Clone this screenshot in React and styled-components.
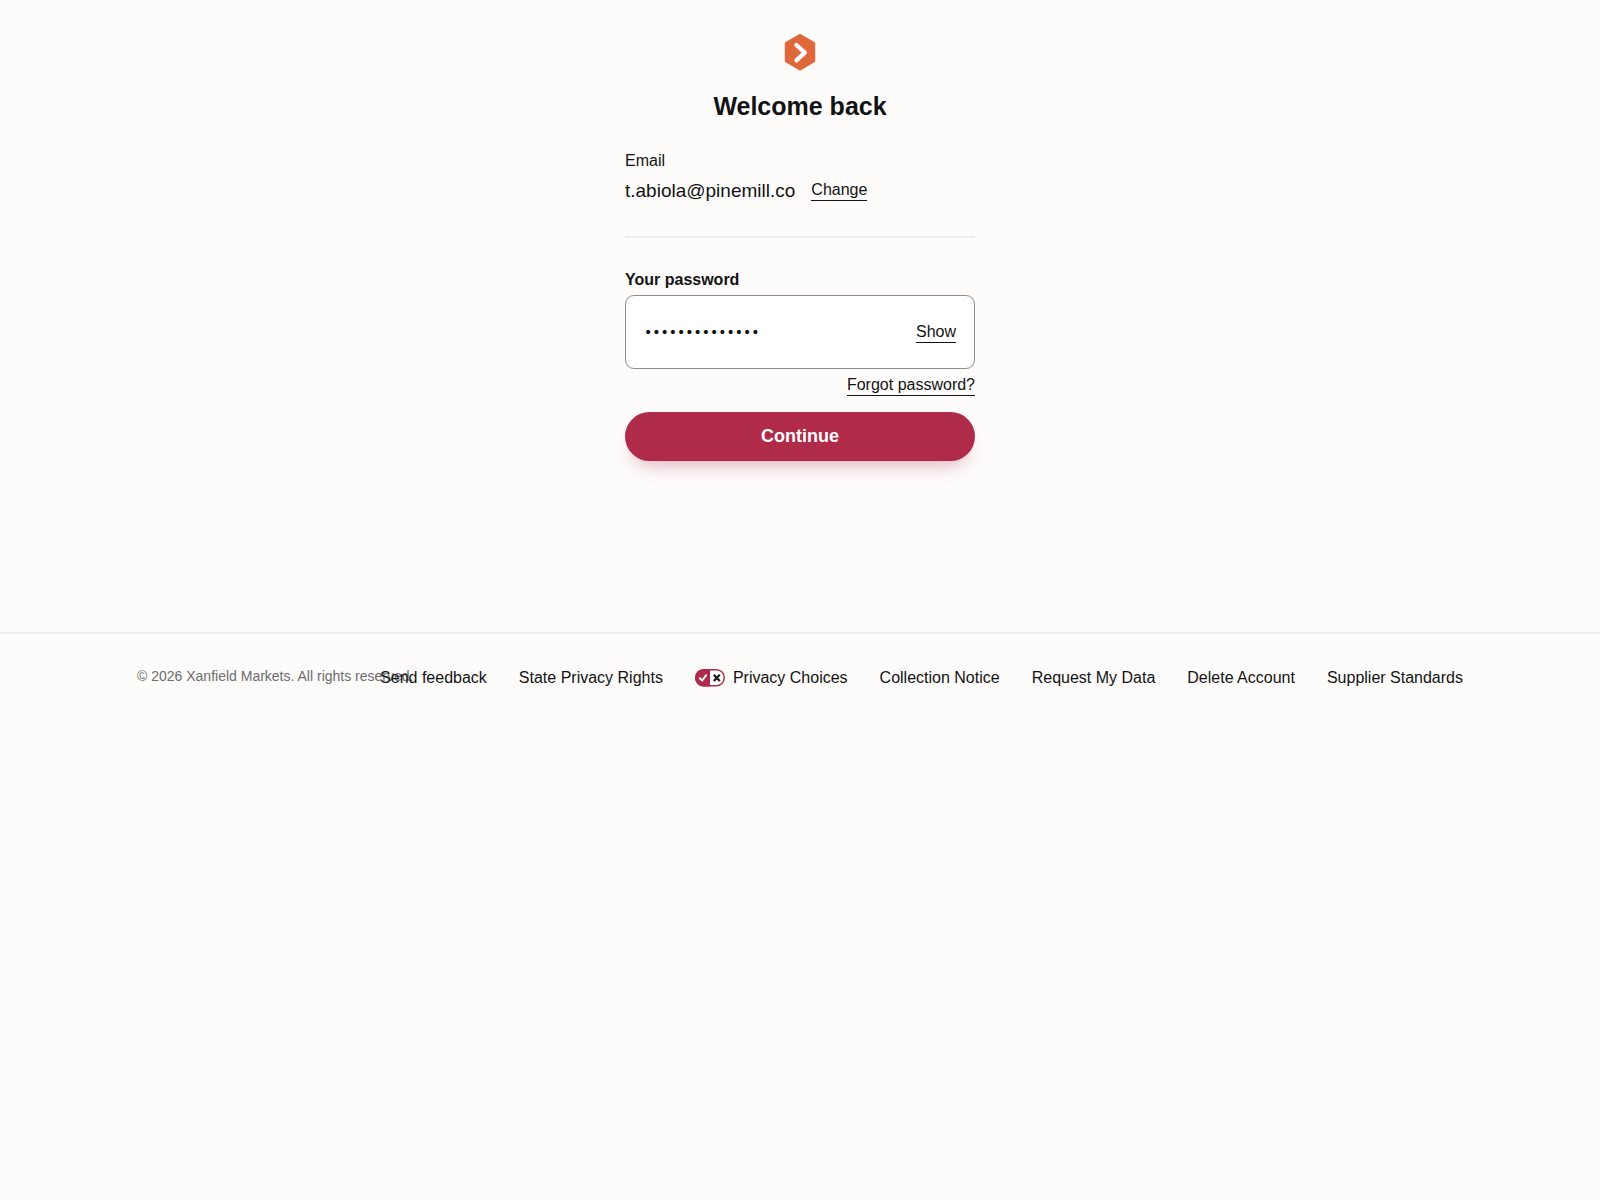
import React, { useState } from "react";
import styled, { createGlobalStyle } from "styled-components";

const ink = "#121314";
const berry = "#b02a4a";
const line = "#eeeeec";

const GlobalStyle = createGlobalStyle`
  * { box-sizing: border-box; }
  body {
    margin: 0;
    background: #fdfcfa;
    color: ${ink};
    font-family: "Liberation Sans", Arial, sans-serif;
    font-size: 16px;
    line-height: 24px;
  }
`;

const Main = styled.main`
  display: flex;
  flex-direction: column;
  align-items: center;
  padding: 32px 24px 171px;
`;

const Logo = styled.svg`
  display: block;
  width: 40px;
  height: 40px;
`;

const Title = styled.h1`
  margin: 16px 0 25px;
  font-size: 25px;
  line-height: 36px;
  font-weight: 700;
`;

const Form = styled.form`
  display: flex;
  flex-direction: column;
  width: 100%;
  max-width: 350px;
`;

const EmailRow = styled.div`
  display: flex;
  align-items: center;
  gap: 16px;
  height: 35px;
  font-size: 19px;
`;

const TextLink = styled.a`
  color: ${ink};
  font-size: 16px;
  line-height: 20px;
  text-decoration: none;
  border-bottom: 1px solid ${ink};
`;

const ForgotLink = styled(TextLink)`
  align-self: flex-end;
  margin: 6px 0 16px;
`;

const Divider = styled.hr`
  width: 100%;
  height: 2px;
  margin: 28px 0 30px;
  border: 0;
  background: ${line};
`;

const Label = styled.label`
  margin-bottom: 3px;
  font-weight: 700;
  line-height: 24px;
`;

const Field = styled.div`
  display: flex;
  align-items: center;
  height: 74px;
  padding: 0 18px;
  border: 1px solid #8b8c90;
  border-radius: 9px;
  background: #fff;
`;

const PasswordInput = styled.input`
  flex: 1;
  min-width: 0;
  padding: 0;
  border: 0;
  outline: 0;
  background: transparent;
  color: ${ink};
  font-family: "DejaVu Sans", sans-serif;
  font-size: 14px;
  line-height: 24px;
`;

const ShowButton = styled.button`
  padding: 0;
  border: 0;
  border-bottom: 1px solid ${ink};
  background: none;
  color: ${ink};
  font: inherit;
  line-height: 20px;
  cursor: pointer;
`;

const SubmitButton = styled.button`
  height: 49px;
  padding: 0 24px;
  border: 0;
  border-radius: 25px;
  background: ${berry};
  color: #fff;
  font-family: inherit;
  font-size: 18px;
  font-weight: 700;
  box-shadow: 0 12px 18px -8px rgba(176, 42, 74, 0.35);
  cursor: pointer;
`;

const Footer = styled.footer`
  border-top: 2px solid ${line};
  padding: 32px 24px;
`;

const FooterInner = styled.div`
  display: flex;
  justify-content: space-between;
  max-width: 1326px;
  margin: 0 auto;
`;

const Copyright = styled.small`
  flex: 0 1 240px;
  min-width: 0;
  color: #6b6c6f;
  font-size: 14px;
  line-height: 20px;
  white-space: nowrap;
`;

const FooterNav = styled.nav`
  display: flex;
  flex: none;
  gap: 32px;
`;

const FooterLink = styled.a`
  display: flex;
  align-items: center;
  gap: 8px;
  color: ${ink};
  text-decoration: none;
`;

const ChoicesIcon = () => (
  <svg width="30" height="18" viewBox="0 0 30 18" aria-hidden="true">
    <rect x="0.75" y="0.75" width="28.5" height="16" rx="8" fill="#fff" stroke={berry} strokeWidth="1.5" />
    <path d="M8.75 0H15v17.5H8.75a8.75 8.75 0 0 1 0-17.5Z" fill={berry} />
    <path d="M4.8 9.2 7.2 11.5 11.2 6.2" fill="none" stroke="#fff" strokeWidth="2" strokeLinecap="round" strokeLinejoin="round" />
    <path d="m18.8 5.8 6 6.2m0-6.2-6 6.2" fill="none" stroke={ink} strokeWidth="2.1" />
  </svg>
);

const links = [
  "Send feedback",
  "State Privacy Rights",
  "Privacy Choices",
  "Collection Notice",
  "Request My Data",
  "Delete Account",
  "Supplier Standards",
];

export default function App() {
  const [password, setPassword] = useState("meadow-lantern");
  const [visible, setVisible] = useState(false);

  return (
    <>
      <GlobalStyle />
      <Main>
        <Logo viewBox="0 0 40 40" aria-hidden="true">
          <path d="M20 1.8 35.2 10.6v19.2L20 38.8 4.8 29.8V10.6Z" fill="#e0673a" />
          <path d="m16.4 13 8.4 7.6-8.4 7.8" fill="none" stroke="#fff" strokeWidth="4.2" strokeLinecap="round" strokeLinejoin="round" />
        </Logo>
        <Title>Welcome back</Title>
        <Form onSubmit={(event) => event.preventDefault()}>
          <div>Email</div>
          <EmailRow>
            <span>t.abiola@pinemill.co</span>
            <TextLink href="#change">Change</TextLink>
          </EmailRow>
          <Divider />
          <Label htmlFor="password">Your password</Label>
          <Field>
            <PasswordInput
              id="password"
              type={visible ? "text" : "password"}
              value={password}
              onChange={(event) => setPassword(event.target.value)}
            />
            <ShowButton type="button" onClick={() => setVisible(!visible)}>
              {visible ? "Hide" : "Show"}
            </ShowButton>
          </Field>
          <ForgotLink href="#forgot">Forgot password?</ForgotLink>
          <SubmitButton type="submit">Continue</SubmitButton>
        </Form>
      </Main>
      <Footer>
        <FooterInner>
          <Copyright>© 2026 Xanfield Markets. All rights reserved.</Copyright>
          <FooterNav>
            {links.map((label) => (
              <FooterLink key={label} href="#">
                {label === "Privacy Choices" && <ChoicesIcon />}
                {label}
              </FooterLink>
            ))}
          </FooterNav>
        </FooterInner>
      </Footer>
    </>
  );
}
